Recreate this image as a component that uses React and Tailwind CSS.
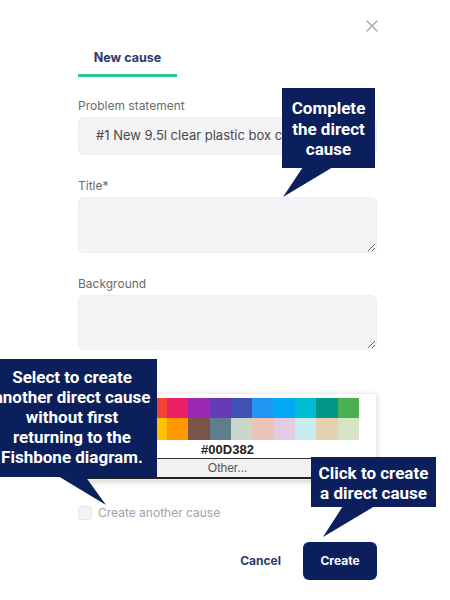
const swatchesTop = [
  "#000000", "#9e9e9e", "#f44336", "#e91e63", "#9c27b0", "#673ab7",
  "#3f51b5", "#2196f3", "#03a9f4", "#00bcd4", "#009688", "#4caf50",
];

const swatchesBottom = [
  "#cddc39", "#ffeb3b", "#ffc107", "#ff9800", "#795548", "#607d8b",
  "#c8d8c8", "#ebc4b8", "#e3cbe2", "#c7ecf1", "#e6d1af", "#d6e4c6",
];

const Field = ({ label, children, className = "" }) => (
  <div className={className}>
    <div className="text-[12px] leading-[16px] text-[#6b6b6b] mb-[3px]">{label}</div>
    {children}
  </div>
);

const Callout = ({ className, children }) => (
  <div
    className={`absolute bg-[#0a1f5c] text-white text-center font-bold text-[17px] ${className}`}
    style={{ fontFamily: "Roboto, 'Liberation Sans', sans-serif" }}
  >
    {children}
  </div>
);

export default function App() {
  return (
    <div
      className="relative w-[450px] h-[600px] bg-white overflow-hidden"
      style={{ fontFamily: "Inter, 'Noto Sans', sans-serif" }}
    >
      <div className="pl-[78px] pr-[73px]">
        {/* Close */}
        <div className="flex justify-end pt-[20px]">
          <svg width="12" height="12" viewBox="0 0 12 12" className="mr-[-1px]">
            <path d="M1 1 L11 11 M11 1 L1 11" stroke="#a3a3a3" strokeWidth="1.4" strokeLinecap="round" />
          </svg>
        </div>

        {/* Tab */}
        <div className="mt-[18px] w-[99px] border-b-[3px] border-[#27cc8a] pb-[8px] text-center text-[12.5px] leading-[16px] font-bold text-[#2d3a6b]">
          New cause
        </div>

        <Field label="Problem statement" className="mt-[21px]">
          <div className="h-[38px] rounded-[6px] bg-[#f4f4f6] border border-[#efeff1] flex items-center pl-[17px] pr-[24px] overflow-hidden whitespace-nowrap text-[13px] text-[#4a4a4a]">
            <span className="overflow-hidden">#1 New 9.5l clear plastic box cracked at the corner</span>
          </div>
        </Field>

        <Field label="Title*" className="mt-[23px]">
          <textarea
            readOnly
            className="block w-full h-[56px] rounded-[6px] bg-[#f4f4f6] border border-[#efeff1] outline-none"
          />
        </Field>

        <Field label="Background" className="mt-[23px]">
          <textarea
            readOnly
            className="block w-full h-[55px] rounded-[6px] bg-[#f4f4f6] border border-[#efeff1] outline-none"
          />
        </Field>

        {/* Create another */}
        <div className="mt-[155px] flex items-center gap-[6px]">
          <div className="w-[14px] h-[14px] rounded-[3px] bg-[#f3f4f6] border border-[#e8e8ea]" />
          <span className="text-[12px] leading-[16px] text-[#a1a1aa]">Create another cause</span>
        </div>

        {/* Actions */}
        <div className="mt-[21px] flex justify-end items-center gap-[22px]">
          <span className="text-[12px] font-bold text-[#2d3a6b]">Cancel</span>
          <button className="w-[74px] h-[38px] rounded-[6px] bg-[#0b1f5c] text-white text-[12px] font-bold">
            Create
          </button>
        </div>
      </div>

      {/* Colour picker popup */}
      <div className="absolute left-[78px] top-[393px] w-[299px] bg-white shadow-[0_2px_6px_rgba(0,0,0,0.18)] border border-[#ececec]">
        <div className="pt-[4px] pl-[24px] pr-[17px]">
          <div className="grid grid-cols-12">
            {swatchesTop.map((c) => (
              <div key={c} className="h-[20px]" style={{ background: c }} />
            ))}
            {swatchesBottom.map((c) => (
              <div key={c} className="h-[22px]" style={{ background: c }} />
            ))}
          </div>
        </div>
        <div
          className="text-center text-[13px] font-bold leading-[17px] pt-[1px] text-[#222]"
          style={{ fontFamily: "'Liberation Sans', Arial, sans-serif" }}
        >
          #00D382
        </div>
        <div
          className="border-t border-[#333] border-b-2 border-b-[#222] bg-[#f1f1f1] h-[21px] flex items-center justify-center text-[12px] text-[#555]"
          style={{ fontFamily: "'Liberation Sans', Arial, sans-serif" }}
        >
          Other...
        </div>
      </div>

      {/* Callout tails */}
      <svg className="absolute inset-0 pointer-events-none" width="450" height="600">
        <polygon points="303,167 333,167 283,197" fill="#0a1f5c" />
        <polygon points="58,476 85,476 106,505" fill="#0a1f5c" />
        <polygon points="343,506 375,506 323,537" fill="#0a1f5c" />
      </svg>

      <Callout className="left-[282px] top-[88px] w-[93px] h-[80px] pt-[10px] leading-[20.5px]">
        Complete
        <br />
        the direct
        <br />
        cause
      </Callout>

      <Callout className="left-[-13px] top-[359px] w-[170px] h-[118px] pt-[8px] leading-[20px]">
        Select to create
        <br />
        another direct cause
        <br />
        without first
        <br />
        returning to the
        <br />
        Fishbone diagram.
      </Callout>

      <Callout className="left-[311px] top-[457px] w-[125px] h-[50px] pt-[6px] leading-[20px]">
        Click to create
        <br />a direct cause
      </Callout>
    </div>
  );
}
